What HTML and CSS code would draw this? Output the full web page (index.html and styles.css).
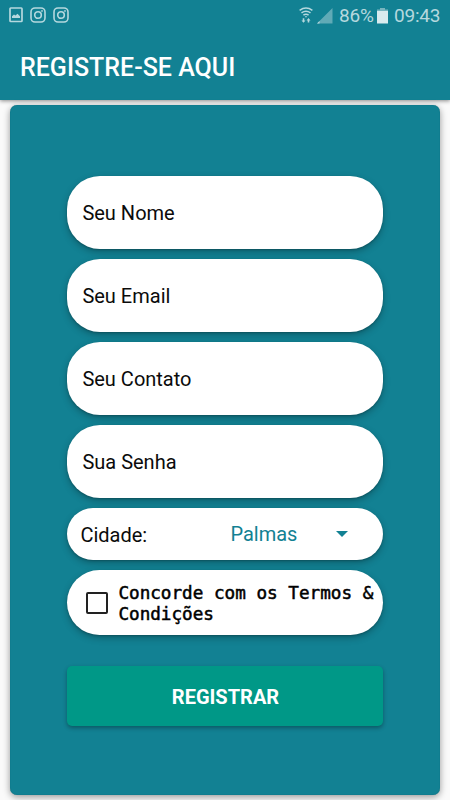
FILE: index.html
```html
<!DOCTYPE html>
<html lang="pt-BR">
<head>
<meta charset="utf-8">
<title>Registre-se aqui</title>
<link rel="stylesheet" href="styles.css">
</head>
<body>
<header class="top">
  <div class="status">
    <div class="notifications">
      <svg width="14" height="16" viewBox="0 0 14 16"><rect x="1" y="1" width="12" height="13.5" rx=".8" fill="none" stroke="currentColor" stroke-width="1.7"/><path d="M3 11V9.300L5 7.500l1.500 1 2-1.800L11 9.300V11z" fill="currentColor"/></svg>
      <svg width="16" height="16" viewBox="0 0 16 16" fill="none" stroke="currentColor" stroke-width="1.6"><rect x="1" y="1" width="14" height="14" rx="4"/><circle cx="8" cy="8" r="3.3"/><circle cx="12" cy="4" r=".3"/></svg>
      <svg width="16" height="16" viewBox="0 0 16 16" fill="none" stroke="currentColor" stroke-width="1.6"><rect x="1" y="1" width="14" height="14" rx="4"/><circle cx="8" cy="8" r="3.3"/><circle cx="12" cy="4" r=".3"/></svg>
    </div>
    <div class="system">
      <svg class="wifi" width="14" height="17" viewBox="0 0 14 17" fill="none" stroke="currentColor" stroke-width="1.5"><path d="M.6 3.300Q7-1.200 13.400 3.300M2.500 5.900q4.500-3.200 9 0M4.400 8.200q2.600-1.800 5.200 0"/><path d="M5.800 9.300h2.400L7 10.700zM3.700 11.300h1.600v2.100h1.200l-2 2.400-2-2.400h1.200zM8.700 15.600h1.600v-2.100h1.200l-2-2.400-2 2.400h1.200z" fill="currentColor" stroke="none"/></svg>
      <svg class="signal" width="16" height="16" viewBox="0 0 16 16" fill="currentColor"><path d="M15.500 0v15.500H0z" opacity=".48"/><path d="M2.500 13v2.500H0z"/></svg>
      <span class="percent">86%</span>
      <svg class="battery" width="11" height="16" viewBox="0 0 11 16"><path d="M3 0h5v1.500h3V4H0V1.500h3z" fill="#78b5bf"/><path d="M0 3h11v12.500H0z" fill="#d9ebee"/></svg>
      <span class="clock">09:43</span>
    </div>
  </div>
  <h1>REGISTRE-SE AQUI</h1>
</header>
<main class="card">
  <form class="form">
    <label class="pill field"><span>Seu Nome</span></label>
    <label class="pill field"><span>Seu Email</span></label>
    <label class="pill field"><span>Seu Contato</span></label>
    <label class="pill field"><span>Sua Senha</span></label>
    <div class="pill city">
      <span class="city-label">Cidade:</span>
      <span class="city-value">Palmas</span>
      <svg width="12" height="6" viewBox="0 0 12 6"><path d="M0 0h12L6 6z" fill="#128193"/></svg>
    </div>
    <label class="pill terms">
      <span class="box"></span>
      <span class="terms-text">Concorde com os Termos &amp;<br>Condições</span>
    </label>
    <button class="submit" type="button">REGISTRAR</button>
  </form>
</main>
</body>
</html>
```
FILE: styles.css
```css
* { box-sizing: border-box; }
body {
  margin: 0;
  width: 450px;
  height: 800px;
  overflow: hidden;
  background: #fafafa;
  font-family: Roboto, sans-serif;
  color: #0b0b0b;
}
svg { display: block; flex: none; }
.top {
  height: 100px;
  background: #128193;
  box-shadow: 0 1px 4px rgba(0, 0, 0, .45);
}
.status {
  height: 32px;
  padding: 0 9px;
  display: flex;
  justify-content: space-between;
  color: #b5d8de;
}
.notifications { display: flex; gap: 7px; padding-top: 7px; }
.system {
  display: flex;
  align-items: flex-start;
  padding-top: 7px;
  font-size: 19px;
  line-height: 18px;
}
.signal { margin: 1px 6px 0 4px; }
.percent { width: 34px; white-space: nowrap; letter-spacing: -.2px; }
.battery { margin: 1px 6px 0 4px; }
.clock { width: 47px; white-space: nowrap; letter-spacing: -.2px; }
h1 {
  margin: 20px 0 0 20px;
  font-size: 25px;
  line-height: 31px;
  font-weight: 500;
  color: #fff;
}
.card {
  width: 430px;
  height: 690px;
  margin: 5px 10px 0;
  padding: 71.400px 57.400px 0;
  border-radius: 7px;
  background: #128193;
  box-shadow: inset 0 0 1px #00606f, 0 2px 7px rgba(0, 0, 0, .4);
}
.form { display: flex; flex-direction: column; gap: 10px; width: 315.200px; }
.pill {
  display: flex;
  align-items: center;
  background: #fff;
  border-radius: 33px;
  box-shadow: 0 3px 7px rgba(0, 0, 0, .26), 0 1px 2px rgba(0, 0, 0, .2);
}
.field {
  height: 73px;
  padding: 1px 0 0 15px;
  font-size: 20px;
}
.city { height: 52px; padding-left: 13px; font-size: 20px; }
.city-label { width: 150px; padding-top: 2px; }
.city-value { width: 106px; color: #128193; }
.terms { height: 64.400px; padding-left: 19px; }
.box {
  width: 22px;
  height: 22px;
  border: 2px solid #222;
  border-radius: 2px;
  flex: none;
}
.terms-text {
  margin-left: 10px;
  padding-top: 3px;
  font: 17.650px/21px "DejaVu Sans Mono", monospace;
  color: #000;
  white-space: nowrap;
  -webkit-text-stroke: .5px currentColor;
}
.submit {
  height: 60px;
  margin: 21.500px 0 0;
  padding: 1px 0 0 1px;
  border: 0;
  border-radius: 5px;
  background: #009887;
  color: #fff;
  font: 700 20px Roboto, sans-serif;
  box-shadow: 0 2px 4px rgba(0, 0, 0, .32);
}
```
